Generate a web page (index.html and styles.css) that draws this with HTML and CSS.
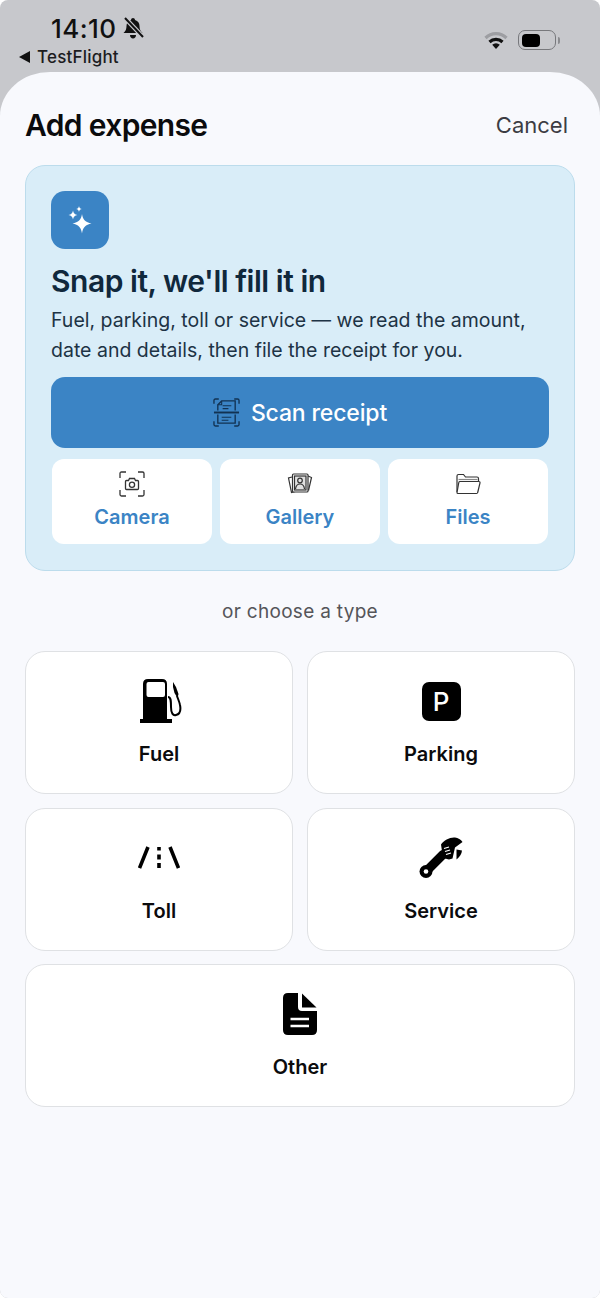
FILE: index.html
```html
<!DOCTYPE html>
<html lang="en">
<head>
    <meta charset="UTF-8">
    <meta name="viewport" content="width=device-width, initial-scale=1.0">
    <title>Add expense</title>
    <link rel="stylesheet" href="styles.css">
</head>
<body>
    <div class="screen">
        <!-- status bar -->
        <div class="status">
            <div class="status-left">
                <div class="clock">
                    <span class="time">14:10</span>
                    <svg width="23" height="22" viewBox="0 0 23 22">
                        <path d="M11 1c1 0 2 .7 2 2 3 .8 4.500 3.200 4.500 6 0 3 .8 5 3 7H1.500c2.200-2 3-4 3-7 0-2.800 1.500-5.200 4.500-6 0-1.300 1-2 2-2z" fill="#111"/>
                        <path d="M8 18h6c0 2-1.300 3.500-3 3.500S8 20 8 18z" fill="#111"/>
                        <path d="M3 1l18 19" stroke="#c7c8cc" stroke-width="4.500"/>
                        <path d="M3 1l18 19" stroke="#111" stroke-width="2"/>
                    </svg>
                </div>
                <div class="back">
                    <svg width="12" height="12" viewBox="0 0 12 12"><path d="M11 0v12L0 6z" fill="#111"/></svg>
                    <span>TestFlight</span>
                </div>
            </div>
            <div class="status-right">
                <svg width="24" height="20" viewBox="0 0 24 20">
                    <path d="M1.500 8a15 15 0 0 1 21 0" fill="none" stroke="#9d9ea2" stroke-width="3.200"/>
                    <path d="M5.500 12a9.500 9.500 0 0 1 13 0" fill="none" stroke="#111" stroke-width="3.200"/>
                    <path d="M12 19l-3.800-4.200a5.500 5.500 0 0 1 7.600 0z" fill="#111"/>
                </svg>
                <div class="battery"><div class="battery-fill"></div></div>
                <div class="battery-nib"></div>
            </div>
        </div>

        <div class="sheet">
            <div class="sheet-head">
                <h1>Add expense</h1>
                <span class="cancel">Cancel</span>
            </div>

            <!-- scan card -->
            <div class="hero">
                <div class="hero-icon">
                    <svg width="26" height="30" viewBox="0 0 26 30" fill="#fff">
                        <path d="M15 9c.8 5.500 3.500 8.500 9.500 9.500-6 1-8.700 4-9.500 10-.8-6-3.500-9-9.500-10 6-1 8.700-4 9.500-9.500z"/>
                        <path d="M6 5.500c.4 2.800 1.700 4 4.500 4.500-2.800.5-4.100 1.700-4.500 4.500C5.600 11.700 4.300 10.500 1.500 10 4.300 9.500 5.600 8.300 6 5.500z"/>
                        <path d="M12 1c.3 1.900 1.100 2.700 3 3-1.900.3-2.700 1.100-3 3-.3-1.900-1.100-2.700-3-3 1.900-.3 2.700-1.100 3-3z"/>
                    </svg>
                </div>
                <h2>Snap it, we'll fill it in</h2>
                <p>Fuel, parking, toll or service — we read the amount, date and details, then file the receipt for you.</p>
                <button class="scan">
                    <svg width="27" height="29" viewBox="0 0 28 30" fill="none" stroke="#123252" stroke-width="1.400">
                        <path d="M1 6V2.500Q1 1 2.500 1H6M22 1h3.500Q27 1 27 2.500V6M1 24v3.500Q1 29 2.500 29H6M22 29h3.500q1.500 0 1.500-1.500V24"/>
                        <path d="M5 13V7l4-4h14v10M5 17v9h18v-9"/>
                        <path d="M9 3v4H5M10 8h9M10 11h6M9 20h10M9 23h7" stroke-width="1.100"/>
                        <path d="M1 15h26" stroke-width="2"/>
                    </svg>
                    <span>Scan receipt</span>
                </button>
                <div class="sources">
                    <div class="source">
                        <svg width="26" height="26" viewBox="0 0 26 26" fill="none" stroke="#333" stroke-width="1.300">
                            <path d="M1 7V2.500Q1 1 2.500 1H7M19 1h4.500Q25 1 25 2.500V7M1 19v4.500Q1 25 2.500 25H7M19 25h4.500q1.500 0 1.500-1.500V19"/>
                            <path d="M6.500 10.500q0-1 1-1h2l1-2h5l1 2h2q1 0 1 1v7q0 1-1 1h-11q-1 0-1-1z"/>
                            <circle cx="13" cy="13.800" r="2.600"/>
                        </svg>
                        <span>Camera</span>
                    </div>
                    <div class="source">
                        <svg width="26" height="26" viewBox="0 0 26 26" fill="none" stroke="#333" stroke-width="1.200">
                            <path d="M5 6l-3.500 1 3 14.500 4-1"/>
                            <path d="M21 5l3.500 1.500-3 13"/>
                            <rect x="5.500" y="3" width="15.500" height="18" rx="1" fill="#fff"/>
                            <rect x="7.500" y="5" width="11.500" height="14" fill="#888" fill-opacity=".25"/>
                            <circle cx="13" cy="9.500" r="2.300"/>
                            <path d="M8.500 18c.5-4 2.500-5 4.500-5s4 1 4.500 5"/>
                        </svg>
                        <span>Gallery</span>
                    </div>
                    <div class="source">
                        <svg width="26" height="26" viewBox="0 0 26 26" fill="none" stroke="#333" stroke-width="1.200">
                            <path d="M2 21V5q0-1.500 1.500-1.500h5l2 2.500H22q1.500 0 1.500 1.500V10"/>
                            <path d="M3.500 8.500h19" stroke="#888"/>
                            <path d="M2 21.500q0 1 1 1h18.500q1 0 1.200-1L25 12q.2-1.500-1.200-1.500H5q-1 0-1.200 1z" fill="#fff"/>
                        </svg>
                        <span>Files</span>
                    </div>
                </div>
            </div>

            <div class="or">or choose a type</div>

            <!-- expense types -->
            <div class="types">
                <div class="type">
                    <svg class="fuel-icon" width="42" height="44" viewBox="0 0 42 44">
                        <path d="M3 5q0-5 5-5h14q5 0 5 5v35h5v4H0v-4h3zM6.500 5v11q0 2 2 2H23q2 0 2-2V5q0-2-2-2H8.500q-2 0-2 2z" fill-rule="evenodd"/>
                        <path d="M28 18c3 0 3 4 3 10 0 6 2 9 5 8 4-1 5-5 4-10-.5-3-2-6-3-9" fill="none" stroke="#000" stroke-width="2"/>
                        <path d="M33 3l3 5 2.500 7-1 4-3-5-1.500-6z"/>
                    </svg>
                    <span>Fuel</span>
                </div>
                <div class="type">
                    <div class="parking">P</div>
                    <span>Parking</span>
                </div>
                <div class="type">
                    <svg width="42" height="44" viewBox="0 0 42 44" fill="none" stroke="#000" stroke-width="3.600">
                        <path d="M10 11L1.500 32M32 11l8.500 21"/>
                        <path d="M21 11v3.500M21 18.500v5M21 27v5"/>
                    </svg>
                    <span>Toll</span>
                </div>
                <div class="type">
                    <svg width="44" height="44" viewBox="0 0 44 44">
                        <path d="M7 35.500L24 18.500" stroke="#000" stroke-width="9" stroke-linecap="round"/>
                        <circle cx="7" cy="35.500" r="6.500"/>
                        <path d="M22 8.500C25 4 31 1 36 1.500c3 .5 6 2 7.500 4.500L36 11.500 33.500 22.500 30 23.500 24 22z"/>
                        <path d="M37.500 13.500l5.500 1c0 3-2.500 6.500-5.500 9z"/>
                        <circle cx="7" cy="35.500" r="2.300" fill="#fff"/>
                        <path d="M25 12.500l5-1.500M26 15.500l5-1.500M27 18.500l5-1.500" stroke="#fff" stroke-width="1.300"/>
                    </svg>
                    <span>Service</span>
                </div>
                <div class="type wide">
                    <svg width="36" height="44" viewBox="0 0 36 44">
                        <path d="M6 1h10v14q0 4 4 4h15v19q0 5-5 5H6q-5 0-5-5V6q0-5 5-5z"/>
                        <path d="M20 1.500L34.500 15.500H20z"/>
                        <path d="M8.500 27h18.500M8.500 34h18.500" stroke="#fff" stroke-width="2.600"/>
                    </svg>
                    <span>Other</span>
                </div>
            </div>
        </div>
    </div>
</body>
</html>
```

FILE: styles.css
```css
* {
    box-sizing: border-box;
}

body {
    margin: 0;
    background-color: #ffffff;
    font-family: Inter, "Liberation Sans", sans-serif;
}

.screen {
    display: flex;
    flex-direction: column;
    height: 1298px;
    overflow: hidden;
    border-radius: 8px;
    background-color: #c7c8cc;
}

/* status bar */
.status {
    display: flex;
    justify-content: space-between;
    height: 72px;
    padding: 13px 40px 0 19px;
    flex: none;
}

.clock {
    display: flex;
    align-items: center;
    gap: 6px;
    height: 30px;
    padding-left: 32px;
}

.time {
    font-size: 26px;
    font-weight: 500;
    letter-spacing: 0.4px;
    color: #111111;
}

.back {
    display: flex;
    align-items: center;
    gap: 6px;
    margin-top: 4px;
    font-size: 17px;
    font-weight: 500;
    letter-spacing: 0.2px;
    color: #1c1c1e;
}

.status-right {
    display: flex;
    align-items: center;
    height: 54px;
}

.status-right svg {
    margin-right: 10px;
}

.battery {
    width: 38px;
    height: 20px;
    padding: 2.5px 3px;
    border: 1.5px solid #77787c;
    border-radius: 7px;
}

.battery-fill {
    width: 18px;
    height: 100%;
    border-radius: 4px;
    background-color: #000000;
}

.battery-nib {
    width: 2px;
    height: 7px;
    margin-left: 2px;
    border-radius: 0 2px 2px 0;
    background-color: #8a8b8f;
}

/* sheet */
.sheet {
    flex: 1;
    padding: 0 25px;
    border-radius: 50px 50px 0 0 / 44px 44px 0 0;
    background-color: #f8f9fd;
}

.sheet-head {
    display: flex;
    justify-content: space-between;
    align-items: center;
    height: 93px;
    padding-top: 13px;
    padding-right: 7px;
}

.sheet-head h1 {
    margin: 0;
    font-size: 30px;
    font-weight: 600;
    letter-spacing: -0.65px;
    color: #0b0b0d;
}

.cancel {
    font-size: 22px;
    color: #3c3c43;
}

/* scan card */
.hero {
    height: 406px;
    padding: 25px;
    border: 1px solid #bcdcec;
    border-radius: 20px;
    background-color: #d9edf8;
}

.hero-icon {
    display: flex;
    justify-content: center;
    align-items: center;
    width: 58px;
    height: 58px;
    border-radius: 14px;
    background-color: #3b84c5;
}

.hero h2 {
    margin: 13px 0 0;
    font-size: 30px;
    line-height: 38px;
    font-weight: 600;
    letter-spacing: -0.47px;
    color: #10283c;
}

.hero p {
    margin: 5px 0 0;
    font-size: 19.5px;
    line-height: 30px;
    color: #1d3345;
}

.scan {
    display: flex;
    justify-content: center;
    align-items: center;
    gap: 11px;
    width: 100%;
    height: 71px;
    margin-top: 12px;
    padding: 0;
    border: none;
    border-radius: 14px;
    font-family: inherit;
    font-size: 23px;
    font-weight: 500;
    letter-spacing: -0.15px;
    color: #ffffff;
    background-color: #3b84c5;
}

.sources {
    display: grid;
    grid-template-columns: repeat(3, 1fr);
    gap: 8px;
    margin-top: 11px;
    padding: 0 1px;
}

.source {
    display: flex;
    flex-direction: column;
    align-items: center;
    height: 85px;
    padding-top: 12px;
    border-radius: 12px;
    font-size: 20px;
    font-weight: 600;
    color: #3b84c5;
    background-color: #ffffff;
}

.source span {
    margin-top: 8px;
}

.or {
    height: 80px;
    font-size: 19px;
    line-height: 82px;
    letter-spacing: 0.3px;
    text-align: center;
    color: #555559;
}

/* expense types */
.types {
    display: grid;
    grid-template-columns: repeat(2, 1fr);
    gap: 13.5px 14px;
}

.type {
    display: flex;
    flex-direction: column;
    align-items: center;
    height: 143px;
    padding-top: 27px;
    border: 1px solid #dfe1e4;
    border-radius: 20px;
    font-size: 20px;
    font-weight: 600;
    color: #0b0b0d;
    background-color: #ffffff;
}

.type span {
    margin-top: 19px;
}

.type.wide {
    grid-column: span 2;
}

.fuel-icon {
    margin-left: 4px;
}

.parking {
    display: flex;
    justify-content: center;
    align-items: center;
    width: 39px;
    height: 39px;
    margin: 3px 0 2px;
    border-radius: 7px;
    font-size: 26px;
    font-weight: 500;
    color: #ffffff;
    background-color: #000000;
}
```
